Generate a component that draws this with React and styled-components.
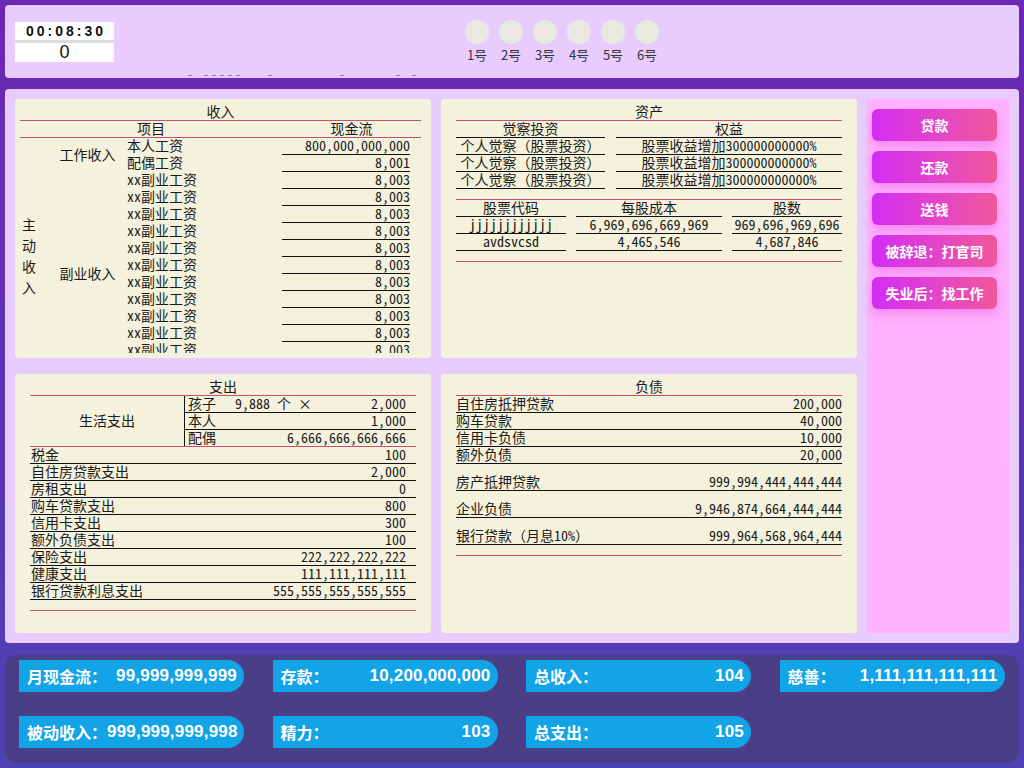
import styled, { createGlobalStyle } from "styled-components";

const GlobalStyle = createGlobalStyle`
  html, body {
    margin: 0;
    padding: 0;
    background: linear-gradient(180deg, #6c27b4 0%, #5a35b3 60%, #4d42b4 100%);
    min-height: 100%;
  }
  * {
    box-sizing: border-box;
  }
`;

const TABLE_FONT = `"Noto Sans Mono CJK SC", "Noto Sans CJK SC", monospace`;
const RED = "#c94f72";

const Page = styled.div`
  width: 1024px;
  height: 768px;
  padding: 5px;
  display: flex;
  flex-direction: column;
  overflow: hidden;
`;

/* ---------- header ---------- */

const Header = styled.header`
  height: 73px;
  flex-shrink: 0;
  background: #e8ccfe;
  border-radius: 4px;
  padding: 0 10px;
  display: flex;
  flex-direction: column;
`;

const HeaderRow = styled.div`
  display: flex;
  align-items: flex-start;
`;

const Timer = styled.div`
  margin-top: 17px;
  width: 99px;
  background: #dcdcdc;
  display: flex;
  flex-direction: column;
  gap: 3px;
`;

const Clock = styled.div`
  height: 18px;
  background: #fff;
  font-family: "Liberation Sans", Arial, sans-serif;
  font-weight: bold;
  font-size: 14px;
  line-height: 18px;
  letter-spacing: 3px;
  padding-left: 3px;
  text-align: center;
  color: #111;
`;

const Counter = styled.div`
  height: 19px;
  background: #fff;
  font-family: "Liberation Sans", Arial, sans-serif;
  font-size: 18px;
  line-height: 19px;
  text-align: center;
  color: #111;
`;

const Players = styled.div`
  margin-left: 351px;
  margin-top: 15px;
  display: flex;
  gap: 10px;
`;

const Player = styled.div`
  width: 24px;
  display: flex;
  flex-direction: column;
  align-items: center;
`;

const Dot = styled.div`
  width: 24px;
  height: 24px;
  border-radius: 50%;
  background: #e9e9e2;
`;

const PlayerName = styled.div`
  margin-top: 3px;
  white-space: nowrap;
  font-family: "Noto Sans CJK SC", sans-serif;
  font-size: 13px;
  line-height: 16px;
  color: #333;
`;

const DashRow = styled.div`
  margin: auto -10px 2px;
  height: 1px;
  display: flex;
`;

const Dash = styled.span`
  width: 4px;
  height: 1px;
  background: #8a7f99;
  margin-left: ${({ $gap }) => $gap}px;
`;

/* ---------- main board ---------- */

const Board = styled.main`
  margin-top: 11px;
  height: 554px;
  flex-shrink: 0;
  background: #e8ccfe;
  border-radius: 4px;
  padding: 10px;
  display: grid;
  grid-template-columns: 416px 416px 142px;
  grid-template-rows: 259px 259px;
  gap: 16px 10px;
`;

const Panel = styled.section`
  background: #f4f2dc;
  border-radius: 4px;
  padding: 5px 15px 0;
  font-family: ${TABLE_FONT};
  font-size: 14px;
  line-height: 14px;
  color: #1a1a1a;
  overflow: hidden;
`;

const ScrollPanel = styled(Panel)`
  padding: 5px 4px 5px 5px;
`;

const Scroller = styled.div`
  height: 100%;
  overflow-y: scroll;

  &::-webkit-scrollbar {
    width: 6px;
  }
  &::-webkit-scrollbar-track {
    background: transparent;
  }
  &::-webkit-scrollbar-thumb {
    background: #6a6a6a;
    border-radius: 3px;
  }
`;

const Title = styled.div`
  height: 17px;
  text-align: center;
  border-bottom: 1px solid ${RED};
  grid-column: 1 / -1;
`;

const Rule = styled.div`
  height: 1px;
  margin-top: 10px;
  background: ${RED};
`;

/* income grid */

const IncomeGrid = styled.div`
  display: grid;
  grid-template-columns: 30px 75px 157px 128px 11px;
  grid-auto-rows: 17px;
`;

const HeadCell = styled.div`
  grid-column: ${({ $col }) => $col};
  grid-row: 2;
  text-align: center;
  border-bottom: 1px solid ${RED};
`;

const GroupCell = styled.div`
  grid-column: ${({ $col }) => $col};
  grid-row: ${({ $row }) => $row} / span ${({ $span }) => $span};
  display: flex;
  align-items: center;
  justify-content: ${({ $left }) => ($left ? "flex-start" : "center")};
  padding-left: ${({ $left }) => ($left ? "2px" : "0")};
  padding-bottom: 2px;
`;

const VerticalText = styled.span`
  display: block;
  width: 14px;
  line-height: 21px;
  word-break: break-all;
`;

const ItemCell = styled.div`
  grid-column: 3;
  grid-row: ${({ $row }) => $row};
  padding-left: 2px;
  white-space: nowrap;
`;

const ValueCell = styled.div`
  grid-column: 4;
  grid-row: ${({ $row }) => $row};
  text-align: right;
  border-bottom: 1px solid #111;
  white-space: nowrap;
`;

/* asset grids */

const TableGrid = styled.div`
  display: grid;
  grid-template-columns: ${({ $cols }) => $cols};
  column-gap: ${({ $gap }) => $gap}px;
  grid-auto-rows: 17px;
`;

const LineCell = styled.div`
  text-align: center;
  border-bottom: 1px solid #111;
  white-space: nowrap;
  overflow: hidden;
`;

/* expense */

const LivingGroup = styled.div`
  display: grid;
  grid-template-columns: 155px 1fr;
  border-bottom: 1px solid ${RED};
`;

const LivingLabel = styled.div`
  grid-row: 1 / span 3;
  border-right: 1px solid #111;
  display: flex;
  align-items: center;
  justify-content: center;
  padding-bottom: 2px;
`;

const LivingRow = styled.div`
  height: 17px;
  display: flex;
  padding: 0 10px 0 3px;
  border-bottom: 1px solid #111;

  &:last-child {
    height: 16px;
    border-bottom: none;
  }
`;

const Count = styled.span`
  margin-left: 19px;
`;

const Amount = styled.span`
  margin-left: auto;
`;

const Row = styled.div`
  height: ${({ $tall }) => ($tall ? "27px" : "17px")};
  padding-top: ${({ $tall }) => ($tall ? "10px" : "0")};
  display: flex;
  justify-content: space-between;
  border-bottom: 1px solid #111;
  padding-right: ${({ $inset }) => ($inset ? "10px" : "0")};
  padding-left: ${({ $inset }) => ($inset ? "1px" : "0")};
  white-space: nowrap;
`;

/* actions */

const Actions = styled.aside`
  grid-column: 3;
  grid-row: 1 / span 2;
  background: #ffb2ff;
  padding: 10px 12px 0 5px;
  display: flex;
  flex-direction: column;
  gap: 10px;
`;

const ActionButton = styled.button`
  height: 32px;
  border: none;
  border-radius: 6px;
  background: linear-gradient(90deg, #d32df4 0%, #e446c6 55%, #f0579c 100%);
  box-shadow: 0 5px 10px rgba(236, 80, 220, 0.45);
  color: #fff;
  font-family: "Noto Sans CJK SC", sans-serif;
  font-weight: bold;
  font-size: 14px;
  cursor: pointer;
  padding: 0;
`;

/* ---------- stats bar ---------- */

const StatsBar = styled.footer`
  margin-top: 12px;
  height: 108px;
  flex-shrink: 0;
  background: #4a3e86;
  border-radius: 12px;
  padding: 5px 14px 0;
  display: grid;
  grid-template-columns: repeat(4, 225px);
  grid-auto-rows: 32px;
  column-gap: 28.5px;
  row-gap: 24px;
  align-content: start;
`;

const Stat = styled.div`
  display: flex;
  justify-content: space-between;
  align-items: center;
  padding: 0 7px 0 8px;
  background: #12a4e6;
  border-radius: 0 16px 16px 0;
  color: #fff;
  font-family: "Liberation Sans", "Noto Sans CJK SC", sans-serif;
  font-weight: bold;
  font-size: 16px;
  white-space: nowrap;
`;

const StatValue = styled.span`
  font-size: 17px;
  letter-spacing: 0.2px;
`;

const dashGaps = [183, 12, 4, 4, 4, 4, 28, 68, 52, 12];

const sideJobs = Array.from({ length: 12 }, () => ({ name: "xx副业工资", value: "8,003" }));

const passive = [
  "利息收入", "股息收入", "房租收入", "版权收入", "专利收入", "基金收益",
  "债券利息", "信托收益", "企业分红", "车位出租", "广告收入", "会员收入",
  "加盟收入", "其他收入", "理财收益",
];

const stocks = [
  ["jjjjjjjjjjjj", "6,969,696,669,969", "969,696,969,696"],
  ["avdsvcsd", "4,465,546", "4,687,846"],
];

const expenses = [
  ["税金", "100"],
  ["自住房贷款支出", "2,000"],
  ["房租支出", "0"],
  ["购车贷款支出", "800"],
  ["信用卡支出", "300"],
  ["额外负债支出", "100"],
  ["保险支出", "222,222,222,222"],
  ["健康支出", "111,111,111,111"],
  ["银行贷款利息支出", "555,555,555,555,555"],
];

const debts = [
  ["自住房抵押贷款", "200,000"],
  ["购车贷款", "40,000"],
  ["信用卡负债", "10,000"],
  ["额外负债", "20,000"],
];

const bigDebts = [
  ["房产抵押贷款", "999,994,444,444,444"],
  ["企业负债", "9,946,874,664,444,444"],
  ["银行贷款（月息10%）", "999,964,568,964,444"],
];

const stats = [
  ["月现金流：", "99,999,999,999"],
  ["存款：", "10,200,000,000"],
  ["总收入：", "104"],
  ["慈善：", "1,111,111,111,111"],
  ["被动收入：", "999,999,999,998"],
  ["精力：", "103"],
  ["总支出：", "105"],
];

function IncomePanel() {
  const work = [
    { name: "本人工资", value: "800,000,000,000" },
    { name: "配偶工资", value: "8,001" },
  ];
  const active = [...work, ...sideJobs];
  const passiveStart = 3 + active.length;

  return (
    <ScrollPanel>
      <Scroller>
        <IncomeGrid>
          <Title>收入</Title>
          <HeadCell $col="1 / 4">项目</HeadCell>
          <HeadCell $col="4 / 6">现金流</HeadCell>

          <GroupCell $col={1} $row={3} $span={active.length} $left>
            <VerticalText>主动收入</VerticalText>
          </GroupCell>
          <GroupCell $col={2} $row={3} $span={2}>工作收入</GroupCell>
          <GroupCell $col={2} $row={5} $span={sideJobs.length}>副业收入</GroupCell>

          {active.map((item, i) => (
            <ItemCell key={`a${i}`} $row={3 + i}>{item.name}</ItemCell>
          ))}
          {active.map((item, i) => (
            <ValueCell key={`av${i}`} $row={3 + i}>{item.value}</ValueCell>
          ))}

          <GroupCell $col={1} $row={passiveStart} $span={passive.length} $left>
            <VerticalText>被动收入</VerticalText>
          </GroupCell>
          <GroupCell $col={2} $row={passiveStart} $span={passive.length}>投资收入</GroupCell>
          {passive.map((name, i) => (
            <ItemCell key={`p${i}`} $row={passiveStart + i}>{name}</ItemCell>
          ))}
          {passive.map((name, i) => (
            <ValueCell key={`pv${i}`} $row={passiveStart + i}>0</ValueCell>
          ))}
        </IncomeGrid>
      </Scroller>
    </ScrollPanel>
  );
}

function AssetPanel() {
  const insights = [0, 1, 2];
  return (
    <Panel>
      <Title>资产</Title>
      <TableGrid $cols="149px 1fr" $gap={11}>
        <LineCell>觉察投资</LineCell>
        <LineCell>权益</LineCell>
        {insights.flatMap((i) => [
          <LineCell key={`n${i}`}>个人觉察（股票投资）</LineCell>,
          <LineCell key={`v${i}`}>股票收益增加300000000000%</LineCell>,
        ])}
      </TableGrid>
      <Rule />
      <TableGrid $cols="110px 146px 1fr" $gap={10}>
        <LineCell>股票代码</LineCell>
        <LineCell>每股成本</LineCell>
        <LineCell>股数</LineCell>
        {stocks.flatMap((row) =>
          row.map((cell, j) => <LineCell key={`${row[0]}${j}`}>{cell}</LineCell>)
        )}
      </TableGrid>
      <Rule />
    </Panel>
  );
}

function ExpensePanel() {
  return (
    <Panel>
      <Title>支出</Title>
      <LivingGroup>
        <LivingLabel>生活支出</LivingLabel>
        <LivingRow>
          孩子<Count>9,888 个 ×</Count>
          <Amount>2,000</Amount>
        </LivingRow>
        <LivingRow>
          本人<Amount>1,000</Amount>
        </LivingRow>
        <LivingRow>
          配偶<Amount>6,666,666,666,666</Amount>
        </LivingRow>
      </LivingGroup>
      {expenses.map(([name, value]) => (
        <Row key={name} $inset>
          <span>{name}</span>
          <span>{value}</span>
        </Row>
      ))}
      <Rule />
    </Panel>
  );
}

function DebtPanel() {
  return (
    <Panel>
      <Title>负债</Title>
      {debts.map(([name, value]) => (
        <Row key={name}>
          <span>{name}</span>
          <span>{value}</span>
        </Row>
      ))}
      {bigDebts.map(([name, value]) => (
        <Row key={name} $tall>
          <span>{name}</span>
          <span>{value}</span>
        </Row>
      ))}
      <Rule />
    </Panel>
  );
}

export default function App() {
  return (
    <>
      <GlobalStyle />
      <Page>
        <Header>
          <HeaderRow>
            <Timer>
              <Clock>00:08:30</Clock>
              <Counter>0</Counter>
            </Timer>
            <Players>
              {[1, 2, 3, 4, 5, 6].map((n) => (
                <Player key={n}>
                  <Dot />
                  <PlayerName>{n}号</PlayerName>
                </Player>
              ))}
            </Players>
          </HeaderRow>
          <DashRow>
            {dashGaps.map((g, i) => (
              <Dash key={i} $gap={g} />
            ))}
          </DashRow>
        </Header>

        <Board>
          <IncomePanel />
          <AssetPanel />
          <Actions>
            <ActionButton>贷款</ActionButton>
            <ActionButton>还款</ActionButton>
            <ActionButton>送钱</ActionButton>
            <ActionButton>被辞退：打官司</ActionButton>
            <ActionButton>失业后：找工作</ActionButton>
          </Actions>
          <ExpensePanel />
          <DebtPanel />
        </Board>

        <StatsBar>
          {stats.map(([label, value]) => (
            <Stat key={label}>
              <span>{label}</span>
              <StatValue>{value}</StatValue>
            </Stat>
          ))}
        </StatsBar>
      </Page>
    </>
  );
}
